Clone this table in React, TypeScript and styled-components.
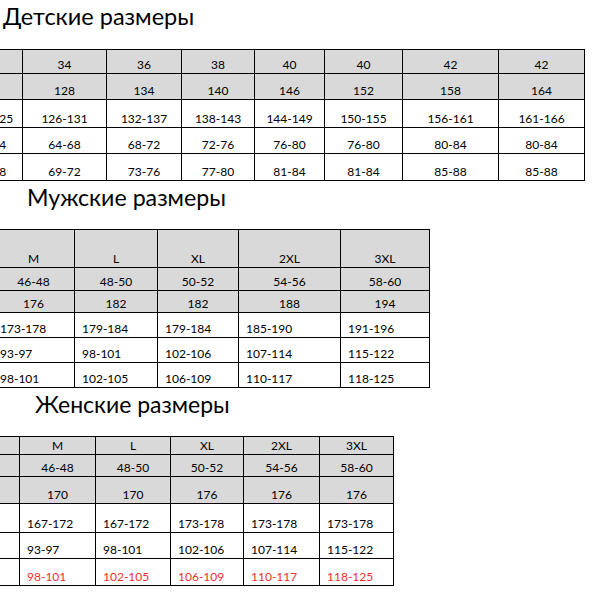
import React from "react";
import styled, { createGlobalStyle } from "styled-components";

const Global = createGlobalStyle`
  html, body { margin: 0; padding: 0; background: #fff; overflow: hidden; }
  body { font-family: Lato, "Liberation Sans", sans-serif; color: #000; }
`;

const Page = styled.div`
  width: 605px;
  height: 605px;
  overflow: hidden;
  display: flex;
  flex-direction: column;
`;

const Section = styled.section`
  display: flex;
  flex-direction: column;
  align-items: flex-start;
`;

const Title = styled.h2<{ $indent: number; $gap: number; $size: number }>`
  margin: 2px 0 ${(p) => p.$gap}px;
  padding-left: ${(p) => p.$indent}px;
  font-family: Lato, "Liberation Sans", sans-serif;
  font-weight: 400;
  font-size: ${(p) => p.$size}px;
  line-height: 29px;
  height: 29px;
  white-space: nowrap;
`;

const Grid = styled.div<{ $cols: string; $rows: string; $shift: number }>`
  display: grid;
  grid-template-columns: ${(p) => p.$cols};
  grid-template-rows: ${(p) => p.$rows};
  margin-left: ${(p) => p.$shift}px;
  border-top: 1px solid #000;
  border-left: 1px solid #000;
  width: max-content;
`;

const Cell = styled.div<{ $head?: boolean; $left?: boolean; $red?: boolean }>`
  box-sizing: border-box;
  display: flex;
  align-items: flex-end;
  justify-content: ${(p) => (p.$left ? "flex-start" : "center")};
  padding: 0 0 1px ${(p) => (p.$left ? "7px" : "0")};
  border-right: 1px solid #000;
  border-bottom: 1px solid #000;
  background: ${(p) => (p.$head ? "#d9d9d9" : "#fff")};
  color: ${(p) => (p.$red ? "#f22d2d" : "#000")};
  font-size: 12px;
  line-height: 15px;
  white-space: nowrap;
  overflow: hidden;
`;

type Row = { cells: string[]; head?: boolean; left?: boolean; red?: boolean };

type TableSpec = {
  title: string;
  size: number;
  indent: number;
  gap: number;
  cols: number[];
  rows: number[];
  shift: number;
  data: Row[];
};

const tables: TableSpec[] = [
  {
    title: "Детские размеры",
    size: 23.5,
    indent: 3,
    gap: 18,
    cols: [65, 84, 75, 73, 70, 78, 96, 86],
    rows: [24, 26, 28, 26, 27],
    shift: -43,
    data: [
      { head: true, cells: ["", "34", "36", "38", "40", "40", "42", "42"] },
      { head: true, cells: ["", "128", "134", "140", "146", "152", "158", "164"] },
      { cells: ["120-125", "126-131", "132-137", "138-143", "144-149", "150-155", "156-161", "161-166"] },
      { cells: ["60-64", "64-68", "68-72", "72-76", "76-80", "76-80", "80-84", "80-84"] },
      { cells: ["65-68", "69-72", "73-76", "77-80", "81-84", "81-84", "85-88", "85-88"] },
    ],
  },
  {
    title: "Мужские размеры",
    size: 23.2,
    indent: 27,
    gap: 17,
    cols: [82, 83, 81, 102, 89],
    rows: [38, 23, 22, 25, 25, 25],
    shift: -8,
    data: [
      { head: true, cells: ["M", "L", "XL", "2XL", "3XL"] },
      { head: true, cells: ["46-48", "48-50", "50-52", "54-56", "58-60"] },
      { head: true, cells: ["176", "182", "182", "188", "194"] },
      { left: true, cells: ["173-178", "179-184", "179-184", "185-190", "191-196"] },
      { left: true, cells: ["93-97", "98-101", "102-106", "107-114", "115-122"] },
      { left: true, cells: ["98-101", "102-105", "106-109", "110-117", "118-125"] },
    ],
  },
  {
    title: "Женские размеры",
    size: 23,
    indent: 35,
    gap: 17,
    cols: [60, 76, 75, 73, 76, 74],
    rows: [18, 22, 27, 29, 26, 27],
    shift: -41,
    data: [
      { head: true, cells: ["", "M", "L", "XL", "2XL", "3XL"] },
      { head: true, cells: ["", "46-48", "48-50", "50-52", "54-56", "58-60"] },
      { head: true, cells: ["", "170", "170", "176", "176", "176"] },
      { left: true, cells: ["", "167-172", "167-172", "173-178", "173-178", "173-178"] },
      { left: true, cells: ["", "93-97", "98-101", "102-106", "107-114", "115-122"] },
      { left: true, red: true, cells: ["", "98-101", "102-105", "106-109", "110-117", "118-125"] },
    ],
  },
];

function SizeTable({ spec }: { spec: TableSpec }) {
  return (
    <Section>
      <Title $indent={spec.indent} $gap={spec.gap} $size={spec.size}>
        {spec.title}
      </Title>
      <Grid
        $cols={spec.cols.map((c) => `${c}px`).join(" ")}
        $rows={spec.rows.map((r) => `${r}px`).join(" ")}
        $shift={spec.shift}
      >
        {spec.data.map((row, ri) =>
          row.cells.map((c, ci) => (
            <Cell key={`${ri}-${ci}`} $head={row.head} $left={row.left} $red={row.red}>
              {c}
            </Cell>
          ))
        )}
      </Grid>
    </Section>
  );
}

export default function App() {
  return (
    <Page>
      <Global />
      {tables.map((t) => (
        <SizeTable key={t.title} spec={t} />
      ))}
    </Page>
  );
}
